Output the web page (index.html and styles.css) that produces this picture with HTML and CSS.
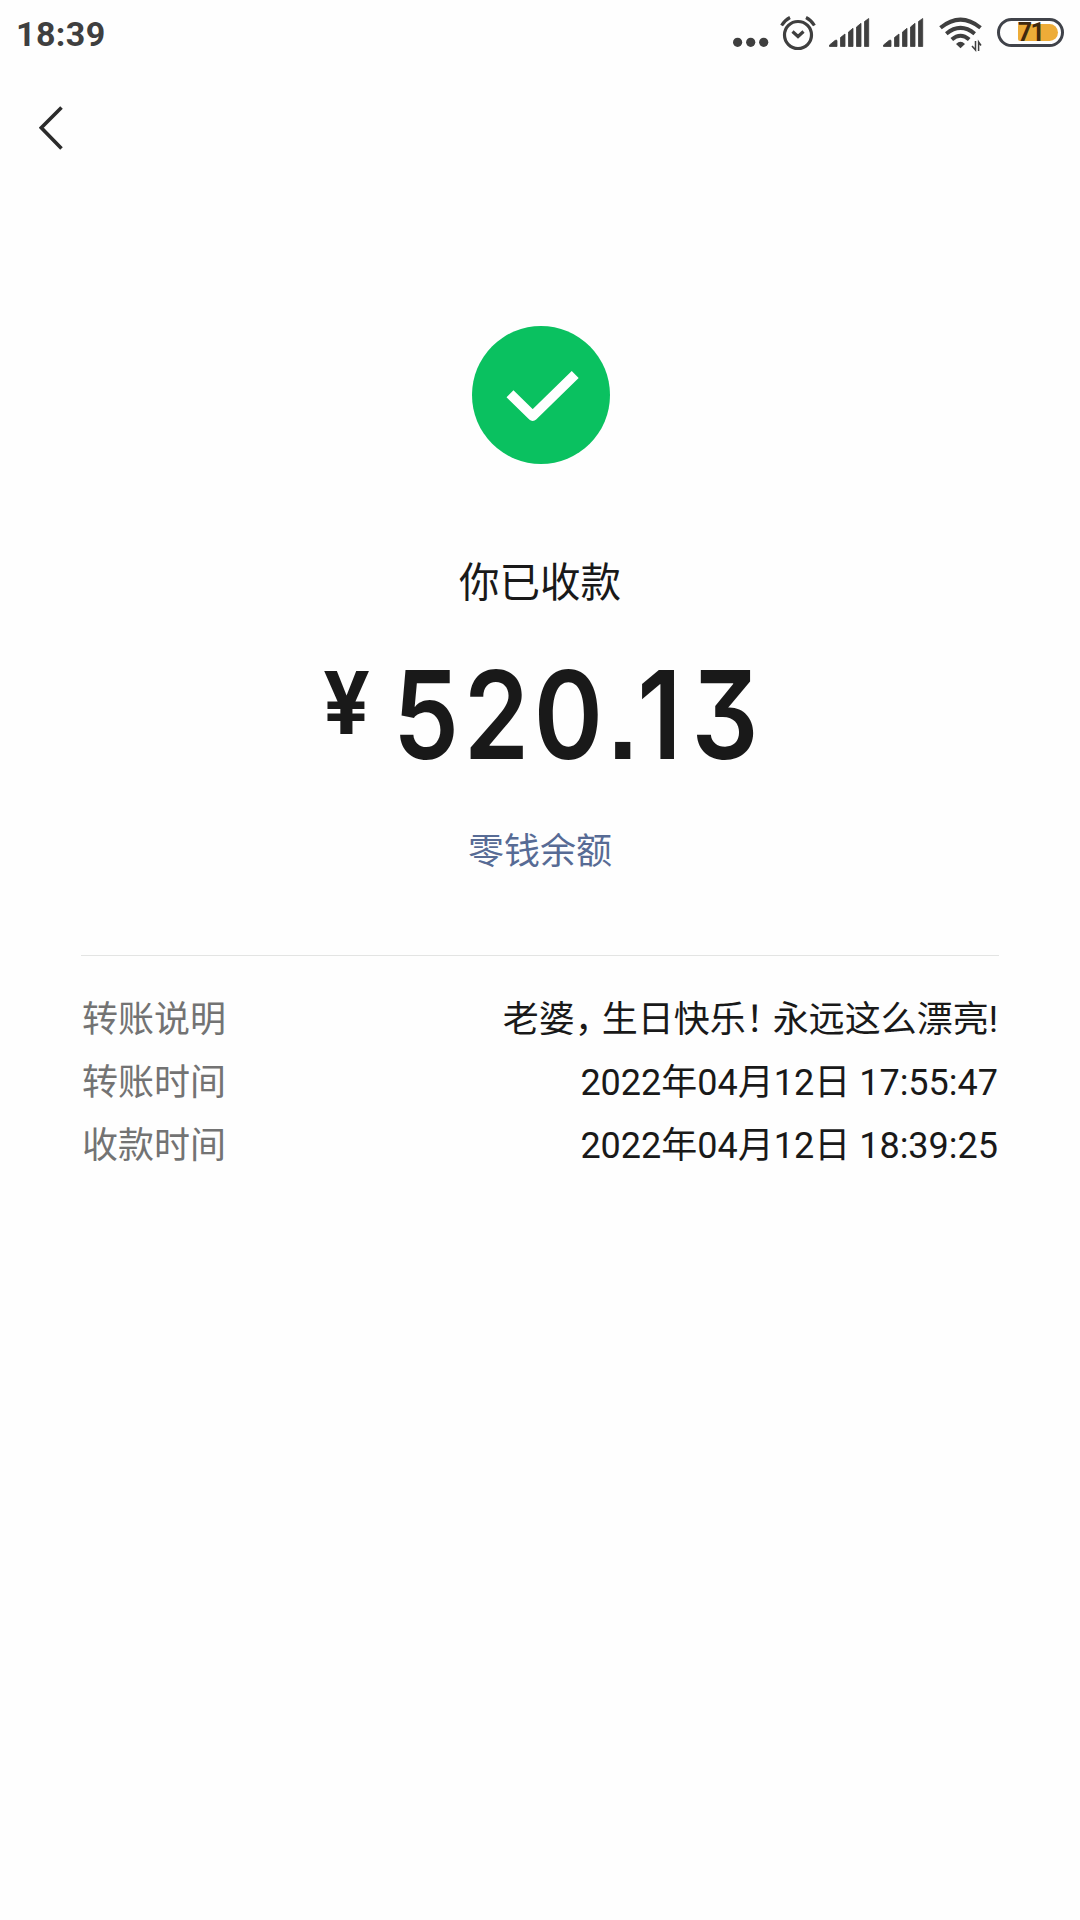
FILE: index.html
```
<!DOCTYPE html>
<html lang="zh-CN">

<head>
  <meta charset="UTF-8">
  <meta name="viewport" content="width=device-width, initial-scale=1.0">
  <title>转账详情</title>
  <link rel="stylesheet" href="styles.css">
</head>

<body>
  <div class="status-bar">
    <span class="time">18:39</span>
    <svg class="status-icons" width="264" height="70" viewBox="0 0 264 70">
      <g fill="#3f3f3f">
        <!-- notifications -->
        <circle cx="4.600" cy="42.300" r="4.600" />
        <circle cx="17.700" cy="42.300" r="4.600" />
        <circle cx="30.700" cy="42.300" r="4.600" />
        <!-- sim 1 -->
        <path id="signal" d="M96.500 46.500V45L102 40.500Q104 39.200 104 41V46.500ZM107.500 46.500V37.500L112 34V46.500ZM115.500 46.500V32L120 28.300V46.500ZM123.500 46.500V27L128 23.300V46.500ZM131.500 46.500V21.500L135.700 18.500V46.500Z" stroke="#3f3f3f" stroke-width=".8" stroke-linejoin="round" />
        <!-- sim 2 -->
        <use href="#signal" x="54" />
        <!-- wifi dot -->
        <path d="M223 44Q227.500 39.500 232 44L227.500 48.200Z" />
      </g>
      <g fill="none" stroke="#3f3f3f" stroke-width="3.200">
        <!-- alarm -->
        <circle cx="65" cy="35" r="13.500" />
        <path d="M59.500 31.500L65 36.500L70.500 31.500M48.600 25.500Q52 20 57 17.500M73 17.500Q78 20 81.400 25.500" />
        <!-- wifi -->
        <path d="M207.500 27.800Q227.500 11.500 247.500 27.800M213.300 33.700Q227.500 22 241.700 33.700M218.800 39.500Q227.500 32 236.200 39.500" stroke-width="4" />
        <path d="M242.500 41V50L239 46M245.600 51V42L248 45.500" stroke-width="1.500" />
      </g>
    </svg>
    <div class="battery">
      <div class="battery-level"></div>
      <span class="battery-text">71</span>
    </div>
  </div>

  <div class="nav">
    <svg width="26" height="46" viewBox="0 0 26 46">
      <path d="M22.500 2.500L2.300 22.800L22.500 43.500" fill="none" stroke="#2b2b2b" stroke-width="3.600" />
    </svg>
  </div>

  <div class="result">
    <svg class="check" width="138" height="138" viewBox="0 0 138 138">
      <circle cx="69" cy="69" r="69" fill="#0ac160" />
      <path d="M38 67.800L60.700 90L103.200 48.500" fill="none" stroke="#fff" stroke-width="9.900" stroke-linejoin="round" />
    </svg>
    <div class="result-title">你已收款</div>
    <div class="amount">
      <span class="currency">¥</span>
      <span class="number">520<span class="point">.</span><span class="one">1</span>3</span>
    </div>
    <div class="balance">零钱余额</div>
  </div>

  <div class="details">
    <div class="row">
      <span class="label">转账说明</span>
      <span class="value">老婆<span class="punct">，</span>生日快乐<span class="punct">！</span>永远这么漂亮!</span>
    </div>
    <div class="row">
      <span class="label">转账时间</span>
      <span class="value">2022年04月12日 17:55:47</span>
    </div>
    <div class="row">
      <span class="label">收款时间</span>
      <span class="value">2022年04月12日 18:39:25</span>
    </div>
  </div>
</body>

</html>
```
FILE: styles.css
```
* {
  box-sizing: border-box;
}

body {
  margin: 0;
  min-height: 1920px;
  background-color: #fefefe;
  color: #191919;
  font-family: Roboto, "Noto Sans CJK SC", sans-serif;
}

.status-bar {
  display: flex;
  align-items: center;
  height: 70px;
  padding: 0 16px 0 16px;
  color: #3f3f3f;
}

.time {
  font-size: 34px;
  font-weight: 700;
  line-height: 68px;
  letter-spacing: 0.4px;
  padding-bottom: 2px;
}

.status-icons {
  margin-left: auto;
}

.battery {
  display: flex;
  position: relative;
  width: 67px;
  height: 29px;
  margin-bottom: 5px;
  padding: 3px;
  border: 3px solid #40434a;
  border-radius: 15px;
  justify-content: flex-end;
}

.battery-level {
  width: 40px;
  height: 17px;
  background-color: #edac38;
  border-radius: 2px 9px 9px 2px;
}

.battery-text {
  position: absolute;
  left: 0;
  right: 0;
  top: -1px;
  color: #40290f;
  font-size: 25px;
  font-weight: 700;
  line-height: 25px;
  letter-spacing: -1.5px;
  text-align: center;
}

.nav {
  height: 100px;
  padding: 35px 0 0 38.5px;
}

.nav svg {
  display: block;
}

.result {
  display: flex;
  flex-direction: column;
  align-items: center;
  height: 785px;
  padding-top: 155.5px;
}

.check {
  display: block;
  margin-left: 1px;
}

.result-title {
  margin-top: 89.5px;
  font-size: 40.5px;
  line-height: 60px;
}

.amount {
  display: flex;
  align-items: flex-start;
  width: 432px;
  height: 130px;
  margin-top: 47px;
  font-family: Inter, sans-serif;
}

.currency {
  width: 72px;
  margin-left: -1px;
  font-size: 86px;
  font-weight: 700;
  line-height: 87px;
  transform: scaleX(0.96);
  transform-origin: left;
}

.number {
  margin-left: 21px;
  font-size: 122px;
  font-weight: 600;
  line-height: 110px;
  letter-spacing: 5.5px;
  font-feature-settings: "cv09", "ss07";
  transform: scaleX(0.86);
  transform-origin: left;
}

.point {
  margin-left: -2px;
  margin-right: -8px;
}

.one {
  margin-right: 6px;
}

.balance {
  margin-top: 36px;
  color: #576b95;
  font-size: 36px;
  line-height: 52px;
}

.details {
  margin: 0 81px;
  padding-top: 33px;
  border-top: 1px solid #e3e4e3;
}

.row {
  display: flex;
  justify-content: space-between;
  height: 63px;
  padding: 0 1px;
  line-height: 63px;
}

.label {
  color: #737373;
  font-size: 36px;
}

.value {
  font-size: 36px;
}

/* full-width marks are set tighter than the characters */
.punct {
  margin-right: 9px;
  font-feature-settings: "halt";
}
```
